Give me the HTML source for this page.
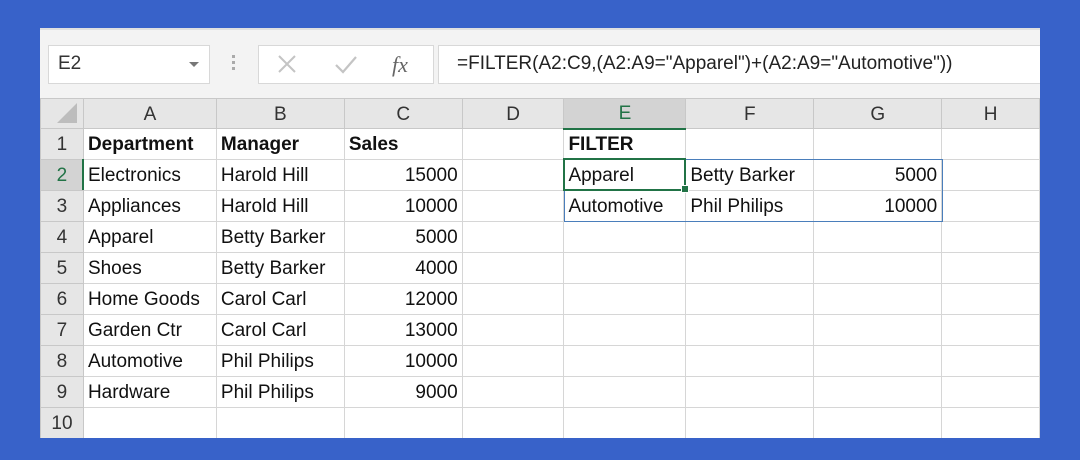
<!DOCTYPE html>
<html><head><style>
body{margin:0;width:1080px;height:460px;background:#3862c9;position:relative;overflow:hidden;font-family:"Liberation Sans",sans-serif}
#sheet{position:absolute;left:40px;top:28px;width:1000px;height:410px;background:#fff;overflow:hidden}
#fb{position:absolute;left:0;top:0;width:1000px;height:70px;background:#f3f3f3;border-top:2px solid #e0e0e0;box-sizing:border-box}
.box{position:absolute;background:#fff;border:1px solid #d8d8d8;top:15px;height:37px}
table{position:absolute;left:0;top:70px;border-collapse:collapse;table-layout:fixed}
tr{height:31px}
td{border:1px solid #d6d6d6;padding:2px 4px 0;font-size:19px;color:#111;white-space:nowrap;overflow:visible}
tr.h{height:30px}
tr.h td{background:#e6e6e6;text-align:center;color:#333;border-color:#c8c8c8;font-size:19px}
td.r{background:#e6e6e6;text-align:center;color:#333;border-color:#c8c8c8;padding:2px 0 0}
.n{text-align:right}
b{font-weight:bold}
</style></head><body>
<div id="sheet">
<div id="fb">
<div class="box" style="left:8px;width:160px"><span style="position:absolute;left:9px;top:7px;font-size:19px;color:#333">E2</span><span style="position:absolute;right:10px;top:16px;width:0;height:0;border-left:5px solid transparent;border-right:5px solid transparent;border-top:5px solid #777"></span></div>
<div style="position:absolute;left:192px;top:25px;width:3px;height:3px;background:#aaa;box-shadow:0 6px 0 #aaa,0 12px 0 #aaa"></div>
<div class="box" style="left:218px;width:174px">
<svg width="174" height="37" style="position:absolute;left:0;top:0"><path d="M20 10 L36 26 M36 10 L20 26" stroke="#c4c4c4" stroke-width="2"/><path d="M77 19 L84 26 L97 11" stroke="#c4c4c4" stroke-width="2.2" fill="none"/><text x="133" y="26" font-family="Liberation Serif" font-style="italic" font-size="22" fill="#666">fx</text></svg></div>
<div class="box" style="left:398px;width:610px"><span style="position:absolute;left:18px;top:7px;font-size:19px;color:#222">=FILTER(A2:C9,(A2:A9="Apparel")+(A2:A9="Automotive"))</span></div>
</div>
<table>
<colgroup><col style="width:43px"><col style="width:133px"><col style="width:128px"><col style="width:118px"><col style="width:102px"><col style="width:122px"><col style="width:128px"><col style="width:128px"><col style="width:98px"></colgroup>
<tr class="h"><td style="position:relative"><svg width="30" height="24" style="position:absolute;right:4px;bottom:3px"><path d="M28 2 L28 22 L8 22 Z" fill="#bdbdbd"/></svg></td><td>A</td><td>B</td><td>C</td><td>D</td><td style="background:#d3d3d3;color:#217346;border-bottom:2px solid #217346">E</td><td>F</td><td>G</td><td>H</td></tr>
<tr><td class="r">1</td><td><b>Department</b></td><td><b>Manager</b></td><td><b>Sales</b></td><td></td><td><b>FILTER</b></td><td></td><td></td><td></td></tr>
<tr><td class="r" style="background:#d3d3d3;color:#217346">2</td><td>Electronics</td><td>Harold Hill</td><td class="n">15000</td><td></td><td>Apparel</td><td>Betty Barker</td><td class="n">5000</td><td></td></tr>
<tr><td class="r">3</td><td>Appliances</td><td>Harold Hill</td><td class="n">10000</td><td></td><td>Automotive</td><td>Phil Philips</td><td class="n">10000</td><td></td></tr>
<tr><td class="r">4</td><td>Apparel</td><td>Betty Barker</td><td class="n">5000</td><td></td><td></td><td></td><td></td><td></td></tr>
<tr><td class="r">5</td><td>Shoes</td><td>Betty Barker</td><td class="n">4000</td><td></td><td></td><td></td><td></td><td></td></tr>
<tr><td class="r">6</td><td>Home Goods</td><td>Carol Carl</td><td class="n">12000</td><td></td><td></td><td></td><td></td><td></td></tr>
<tr><td class="r">7</td><td>Garden Ctr</td><td>Carol Carl</td><td class="n">13000</td><td></td><td></td><td></td><td></td><td></td></tr>
<tr><td class="r">8</td><td>Automotive</td><td>Phil Philips</td><td class="n">10000</td><td></td><td></td><td></td><td></td><td></td></tr>
<tr><td class="r">9</td><td>Hardware</td><td>Phil Philips</td><td class="n">9000</td><td></td><td></td><td></td><td></td><td></td></tr>
<tr><td class="r">10</td><td></td><td></td><td></td><td></td><td></td><td></td><td></td><td></td></tr>
</table>
<div style="position:absolute;left:42px;top:131px;width:2px;height:31px;background:#217346"></div>
<div style="position:absolute;left:524px;top:131px;width:377px;height:61px;border:1px solid #4a7ebb"></div>
<div style="position:absolute;left:523px;top:130px;width:119px;height:29px;border:2px solid #217346"></div>
<div style="position:absolute;left:641px;top:157px;width:6px;height:6px;background:#217346;border:1px solid #fff"></div>
</div>
</body></html>
